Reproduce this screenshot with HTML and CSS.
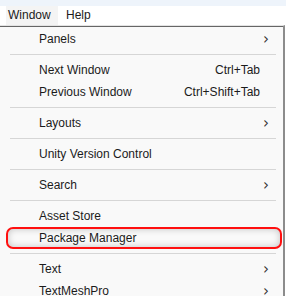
FILE: index.html
```html
<!DOCTYPE html>
<html lang="en">
<head>
  <meta charset="UTF-8">
  <title>Window menu</title>
  <link rel="stylesheet" href="styles.css">
</head>
<body>

<div class="titlebar"></div>

<div class="menubar">
  <div class="menubar-item active">Window</div>
  <div class="menubar-item">Help</div>
</div>

<div class="dropdown">
  <div class="item"><span class="label">Panels</span><span class="chevron">&#x203A;</span></div>
  <div class="sep"></div>
  <div class="item"><span class="label">Next Window</span><span class="shortcut">Ctrl+Tab</span></div>
  <div class="item"><span class="label">Previous Window</span><span class="shortcut">Ctrl+Shift+Tab</span></div>
  <div class="sep"></div>
  <div class="item"><span class="label">Layouts</span><span class="chevron">&#x203A;</span></div>
  <div class="sep"></div>
  <div class="item"><span class="label">Unity Version Control</span></div>
  <div class="sep"></div>
  <div class="item"><span class="label">Search</span><span class="chevron">&#x203A;</span></div>
  <div class="sep"></div>
  <div class="item"><span class="label">Asset Store</span></div>
  <div class="item marked"><span class="label">Package Manager</span></div>
  <div class="sep"></div>
  <div class="item"><span class="label">Text</span><span class="chevron">&#x203A;</span></div>
  <div class="item"><span class="label">TextMeshPro</span><span class="chevron">&#x203A;</span></div>
</div>

</body>
</html>
```

FILE: styles.css
```css
body {
  margin: 0;
  padding: 0;
  height: 296px;
  overflow: hidden;
  background: #ffffff;
  font-family: 'Liberation Sans', Arial, sans-serif;
  font-size: 12px;
  color: #1b1b1b;
}

.titlebar {
  height: 6px;
  background: #eef4fb;
}

.menubar {
  display: flex;
  height: 19px;
  padding-left: 6px;
  background: #ffffff;
}

.menubar-item {
  display: flex;
  align-items: center;
  padding: 0 0 0 8px;
  line-height: 19px;
}

.menubar-item.active {
  background: #f4f4f4;
  width: 52px;
  padding-left: 2px;
  box-sizing: border-box;
}

.dropdown {
  width: 283px;
  padding: 2px 0 0 0;
  background: #f9f9f9;
  border-top: 1px solid #e3e3e3;
  border-right: 2px solid #8c8c8c;
  box-shadow: inset 1px 3px 0 -2px #666;
  height: 272px;
}

.item {
  display: flex;
  align-items: center;
  height: 22px;
  padding: 0 15px 0 39px;
  box-sizing: border-box;
}

.label {
  flex: 1;
}

.shortcut {
  margin-right: 8px;
}

.chevron {
  font-family: 'DejaVu Sans', sans-serif;
  font-size: 15px;
  line-height: 15px;
  margin-right: -1px;
  color: #333;
}

.sep {
  height: 1px;
  margin: 4px 7px 4px 10px;
  background: #d6d6d6;
}

.marked {
  position: relative;
}

.marked::after {
  content: "";
  position: absolute;
  left: 6px;
  right: 1px;
  top: 0;
  bottom: 0;
  border: 2px solid #ff1010;
  border-radius: 7px;
  box-shadow: inset 0 0 7px rgba(0, 0, 0, 0.22);
}
```
